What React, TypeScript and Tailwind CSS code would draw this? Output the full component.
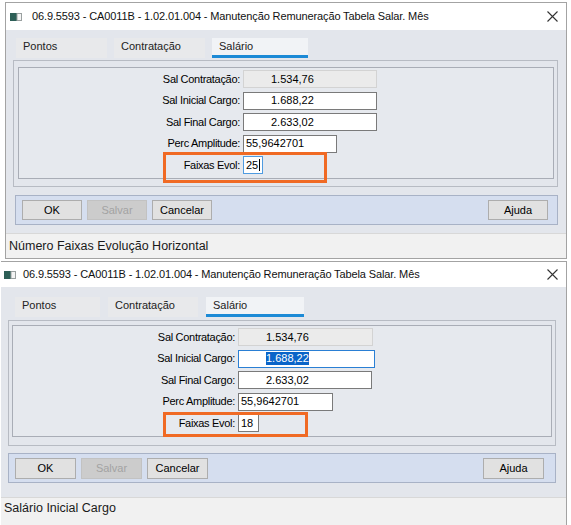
import React from 'react';

type Field = {
  label: string;
  value: string;
  width: string;
  kind?: 'disabled' | 'focused' | 'selected' | 'normal';
  pad?: string;
};

type WindowProps = {
  status: string;
  fields: Field[];
  frame: string;
  titleBar: string;
  iconBox: string;
  body: string;
  tabs: string[];
  tabRow: string;
  panel: string;
  inner: string;
  labelCol: string;
  orange: string;
  bar: string;
  button: string;
  statusBar: string;
};

function WinIcon() {
  return (
    <svg width="12" height="8" viewBox="0 0 12 8">
      <rect x="0" y="0" width="7" height="8" fill="#2d5f57" />
      <rect x="7" y="0.5" width="4.5" height="7" fill="#f4f4f4" stroke="#9aa0a0" strokeWidth="1" />
    </svg>
  );
}

function CloseIcon() {
  return (
    <svg width="11" height="11" viewBox="0 0 11 11">
      <path d="M0.5 0.5 L10.5 10.5 M10.5 0.5 L0.5 10.5" stroke="#333" strokeWidth="1.1" />
    </svg>
  );
}

function Input({ field }: { field: Field }) {
  const kind = field.kind || 'normal';
  const base = `h-[18px] ${field.width} border flex items-center text-[11px] text-black`;
  if (kind === 'disabled') {
    return <div className={`${base} border-[#d3d3d3] bg-[#ebebeb] ${field.pad || 'pl-[27px]'}`}>{field.value}</div>;
  }
  if (kind === 'selected') {
    return (
      <div className={`${base} border-[#2a7fd4] bg-white ${field.pad || 'pl-[27px]'}`}>
        <span className="bg-[#0a64c8] text-white leading-[13px]">{field.value}</span>
      </div>
    );
  }
  if (kind === 'focused') {
    return (
      <div className={`${base} border-[#4f9be0] bg-white ${field.pad || 'pl-[2px]'}`}>
        {field.value}
        <span className="ml-[1px] h-[12px] w-[1px] bg-black" />
      </div>
    );
  }
  return <div className={`${base} border-[#7a7a7a] bg-white ${field.pad || 'pl-[2px]'}`}>{field.value}</div>;
}

function Window(p: WindowProps) {
  const tabNames = ['Pontos', 'Contratação', 'Salário'];
  return (
    <div className={`${p.frame} flex flex-col border-[#a3a3a3] bg-[#e3e6ec]`}>
      <div className={`${p.titleBar} flex items-center bg-white text-[11px] text-[#111]`}>
        <div className={p.iconBox}>
          <WinIcon />
        </div>
        <span className="flex-1 tracking-[-0.12px]">06.9.5593 - CA0011B - 1.02.01.004 - Manutenção Remuneração Tabela Salar. Mês</span>
        <div className="mr-[8px] flex items-center">
          <CloseIcon />
        </div>
      </div>

      <div className={p.body}>
        <div className={`${p.tabRow} flex`}>
          {tabNames.map((name, i) => (
            <div
              key={name}
              className={`${p.tabs[i]} flex h-[20px] items-center pl-[7px] text-[11px] text-[#222] ${
                i === 2 ? 'border-b-[3px] border-[#1c8ad6] bg-[#f1f3f6]' : 'border-b-[3px] border-transparent bg-[#e8e9eb]'
              }`}
            >
              {name}
            </div>
          ))}
        </div>

        <div className={`${p.panel} border border-[#b7bbc3] bg-[#e3e6ec]`}>
          <div className={`${p.inner} relative border border-[#a9adb6] bg-[#e6e9ee]`}>
            <div className="flex flex-col gap-[3.5px]">
              {p.fields.map((f) => (
                <div key={f.label} className="flex items-center gap-[3px]">
                  <div className={`${p.labelCol} text-right text-[11px] text-black tracking-[-0.3px]`}>{f.label}</div>
                  <Input field={f} />
                </div>
              ))}
            </div>
            <div className={`${p.orange} absolute border-[3px] border-[#f06a24]`} />
          </div>
        </div>

        <div className={`${p.bar} flex items-center border border-[#a8b2c6] bg-[#d5deef]`}>
          <button className={`${p.button} border border-[#adadad] bg-[#e1e1e1] text-[11px] text-black`}>OK</button>
          <button className={`${p.button} border border-[#c2c2c2] bg-[#cccccc] text-[11px] text-[#a3a3a3]`}>Salvar</button>
          <button className={`${p.button} border border-[#adadad] bg-[#e1e1e1] text-[11px] text-black`}>Cancelar</button>
          <div className="flex-1" />
          <button className={`${p.button} border border-[#adadad] bg-[#e1e1e1] text-[11px] text-black`}>Ajuda</button>
        </div>
      </div>

      <div className={`${p.statusBar} flex items-center border-t border-[#d8d8d8] bg-[#f1f1f1] pl-[3px] text-[12.5px] text-[#1a1a1a]`}>
        {p.status}
      </div>
    </div>
  );
}

export default function App() {
  return (
    <div className="h-[525px] w-[571px] overflow-hidden bg-white pt-[2px] font-['Liberation_Sans',Arial,sans-serif]">
      <Window
        status="Número Faixas Evolução Horizontal"
        frame="ml-[5px] w-[562px] border"
        titleBar="h-[27px]"
        iconBox="ml-[4px] mr-[10px] flex items-center"
        body="pl-[7px] pr-[8px] pt-[8px] pb-[8px] flex flex-col"
        tabRow="ml-[3px] gap-[7px]"
        tabs={['w-[91px]', 'w-[91px]', 'w-[96px]']}
        panel="mt-[2px] h-[127px] pl-[4px] pr-[3px] pt-[6px]"
        inner="h-[112px] pt-[2px]"
        labelCol="w-[221px]"
        orange="left-[144px] top-[84px] h-[31px] w-[164px]"
        bar="mt-[8px] ml-[2px] h-[30px] pl-[6px] pr-[9px] gap-[5px]"
        button="h-[20px] w-[60px]"
        statusBar="h-[25px]"
        fields={[
          { label: 'Sal Contratação:', value: '1.534,76', width: 'w-[134px]', kind: 'disabled' },
          { label: 'Sal Inicial Cargo:', value: '1.688,22', width: 'w-[134px]', pad: 'pl-[27px]' },
          { label: 'Sal Final Cargo:', value: '2.633,02', width: 'w-[134px]', pad: 'pl-[27px]' },
          { label: 'Perc Amplitude:', value: '55,9642701', width: 'w-[94px]' },
          { label: 'Faixas Evol:', value: '25', width: 'w-[20px]', kind: 'focused' },
        ]}
      />
      <div className="h-[2px]" />
      <Window
        status="Salário Inicial Cargo"
        frame="ml-[1px] w-[566px] border-t border-r"
        titleBar="h-[25px]"
        iconBox="ml-[3px] mr-[7px] flex items-center"
        body="pl-[7px] pr-[10px] pt-[10px] pb-[14px] flex flex-col"
        tabRow="ml-[7px] gap-[8px]"
        tabs={['w-[85px]', 'w-[90px]', 'w-[98px]']}
        panel="mt-[3px] h-[126px] pl-[3px] pr-[3px] pt-[4px]"
        inner="h-[112px] pt-[2px]"
        labelCol="w-[222px]"
        orange="left-[150px] top-[86px] h-[25px] w-[145px]"
        bar="mt-[7px] h-[30px] pl-[6px] pr-[11px] gap-[5px]"
        button="h-[21px] w-[61px]"
        statusBar="h-[30px] pb-[8px]"
        fields={[
          { label: 'Sal Contratação:', value: '1.534,76', width: 'w-[135px]', kind: 'disabled' },
          { label: 'Sal Inicial Cargo:', value: '1.688,22', width: 'w-[137px]', kind: 'selected' },
          { label: 'Sal Final Cargo:', value: '2.633,02', width: 'w-[134px]', pad: 'pl-[27px]' },
          { label: 'Perc Amplitude:', value: '55,9642701', width: 'w-[95px]' },
          { label: 'Faixas Evol:', value: '18', width: 'w-[21px]' },
        ]}
      />
    </div>
  );
}
